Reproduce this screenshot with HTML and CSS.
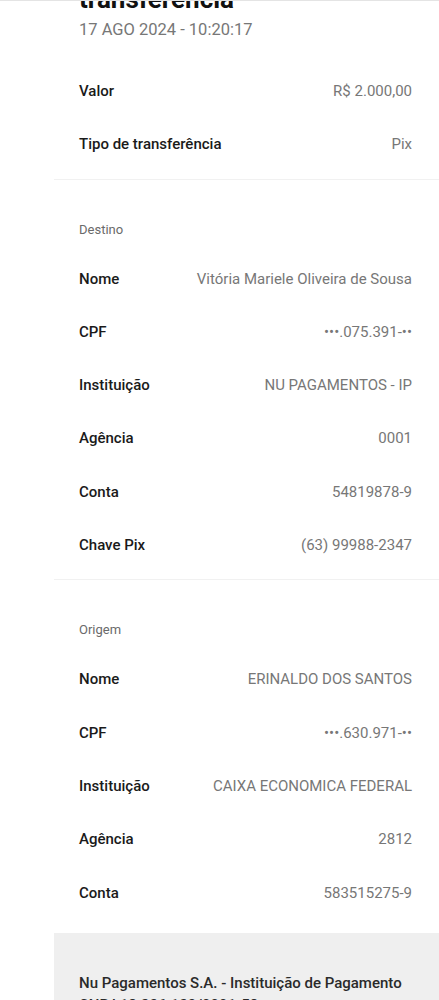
FILE: index.html
```html
<!DOCTYPE html>
<html lang="pt-BR">
<head>
  <meta charset="UTF-8">
  <meta name="viewport" content="width=device-width, initial-scale=1.0">
  <title>Comprovante de transferência</title>
  <link rel="stylesheet" href="styles.css">
</head>
<body>
  <div class="receipt">
    <div class="header">
      <h1 class="title">Comprovante de<br>transferência</h1>
      <div class="date">17 AGO 2024 - 10:20:17</div>
    </div>

    <div class="section">
      <div class="row"><span class="label">Valor</span><span class="value">R$ 2.000,00</span></div>
      <div class="row"><span class="label">Tipo de transferência</span><span class="value">Pix</span></div>
    </div>

    <div class="section">
      <div class="section-title">Destino</div>
      <div class="row"><span class="label">Nome</span><span class="value">Vitória Mariele Oliveira de Sousa</span></div>
      <div class="row"><span class="label">CPF</span><span class="value">•••.075.391-••</span></div>
      <div class="row"><span class="label">Instituição</span><span class="value">NU PAGAMENTOS - IP</span></div>
      <div class="row"><span class="label">Agência</span><span class="value">0001</span></div>
      <div class="row"><span class="label">Conta</span><span class="value">54819878-9</span></div>
      <div class="row"><span class="label">Chave Pix</span><span class="value">(63) 99988-2347</span></div>
    </div>

    <div class="section last">
      <div class="section-title">Origem</div>
      <div class="row"><span class="label">Nome</span><span class="value">ERINALDO DOS SANTOS</span></div>
      <div class="row"><span class="label">CPF</span><span class="value">•••.630.971-••</span></div>
      <div class="row"><span class="label">Instituição</span><span class="value">CAIXA ECONOMICA FEDERAL</span></div>
      <div class="row"><span class="label">Agência</span><span class="value">2812</span></div>
      <div class="row"><span class="label">Conta</span><span class="value">583515275-9</span></div>
    </div>

    <div class="footer">
      <p>Nu Pagamentos S.A. - Instituição de Pagamento<br>CNPJ 18.236.120/0001-58</p>
    </div>
  </div>
</body>
</html>
```

FILE: styles.css
```css
html, body {margin: 0; height: 100%; overflow: hidden}
body {
  background: #fff;
  border-top: 1px solid #e4e4e4;
  font-family: Roboto, "Liberation Sans", sans-serif;
  color: #1f1f1f;
}

.receipt {
  margin-left: 54px;
}

.header {
  padding: 0 27px 0 25px;
  margin-top: -47px;
}
.title {
  margin: 0;
  font-size: 26px;
  line-height: 30px;
  font-weight: 700;
  color: #111;
}
.date {
  margin-top: 6px;
  font-size: 16.5px;
  line-height: 20px;
  color: #777;
}

.section {
  padding: 25px 27px 7px 25px;
  border-bottom: 1px solid #f1f1f1;
}
.section + .section {
  padding-top: 42px;
}
.section.last {
  border-bottom: none;
  padding-bottom: 13px;
}
.section-title {
  font-size: 13px;
  line-height: 16px;
  color: #6a6a6a;
  padding-bottom: 15px;
}

.row {
  display: flex;
  justify-content: space-between;
  align-items: center;
  padding: 17px 0;
  line-height: 19.3px;
  font-size: 15px;
}
.label {
  font-weight: 500;
  color: #1a1a1a;
}
.value {
  color: #777;
  text-align: right;
}

.footer {
  background: #efefef;
  padding: 39px 27px 30px 25px;
}
.footer p {
  margin: 0;
  font-size: 15px;
  line-height: 22px;
  font-weight: 500;
  color: #2a2a2a;
}
```
